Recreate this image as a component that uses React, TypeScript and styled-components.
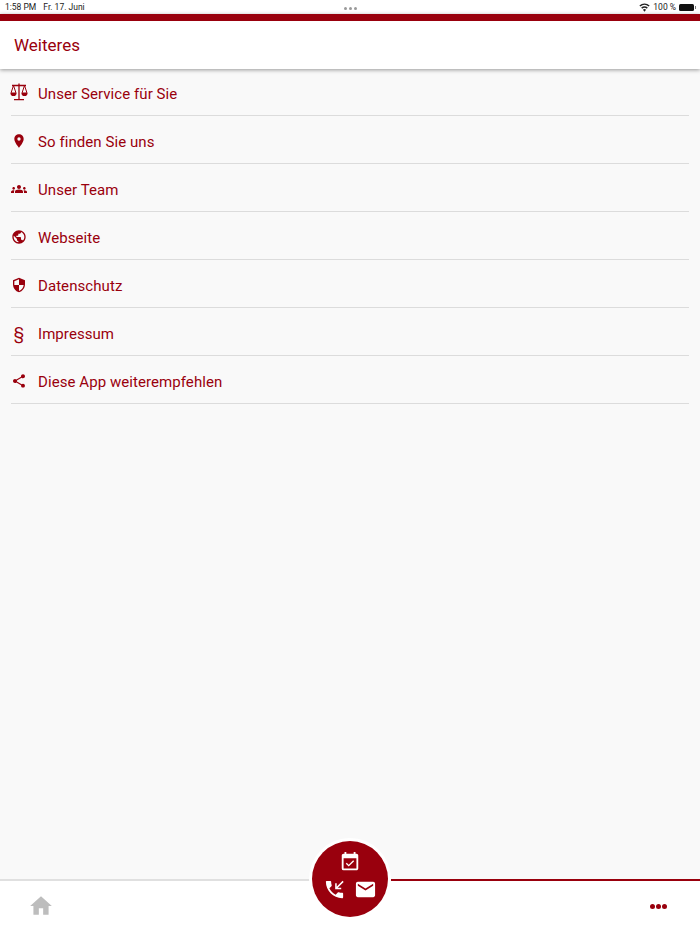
import styled, {createGlobalStyle} from "styled-components";
import {ReactNode} from "react";
import {
    MdEmail,
    MdEventAvailable,
    MdGroups,
    MdHome,
    MdLocationOn,
    MdPublic,
    MdSecurity,
    MdShare,
} from "react-icons/md";

const RED = "#99000d";

const GlobalStyle = createGlobalStyle`
    html, body {
        margin: 0;
        padding: 0;
        background: #f9f9f9;
        font-family: Roboto, "Liberation Sans", sans-serif;
    }
`;

const Page = styled.div`
    position: relative;
    display: flex;
    flex-direction: column;
    width: 700px;
    height: 934px;
    overflow: hidden;
`;

const StatusBar = styled.div`
    display: grid;
    grid-template-columns: 1fr auto 1fr;
    align-items: center;
    height: 14px;
    padding: 0 4px 0 5px;
    background: #fff;
    color: #222;
    font-size: 8.500px;
    line-height: 14px;
`;

const StatusGroup = styled.div`
    display: flex;
    align-items: center;
    gap: 7px;
`;

const StatusRight = styled(StatusGroup)`
    justify-content: flex-end;
    gap: 3px;
`;

const Grabber = styled.div`
    display: flex;
    gap: 2px;
    margin-top: 3px;

    span {
        width: 3px;
        height: 3px;
        border-radius: 50%;
        background: #9a9a9a;
    }
`;

const Battery = styled.div`
    display: flex;
    align-items: center;
    width: 17px;
    height: 8px;

    &::before {
        content: "";
        width: 15px;
        height: 7px;
        border-radius: 1.500px;
        background: #111;
    }

    &::after {
        content: "";
        width: 1px;
        height: 3px;
        margin-left: 1px;
        background: #777;
    }
`;

const Header = styled.header`
    position: relative;
    z-index: 1;
    display: flex;
    align-items: center;
    height: 48px;
    padding-left: 14px;
    border-top: 7px solid ${RED};
    background: #fff;
    box-shadow: 0 1px 4px rgba(0, 0, 0, 0.4);
    color: ${RED};
    font-size: 17px;
`;

const List = styled.ul`
    flex: 1;
    margin: -1px 0 0;
    padding: 0 11px;
    list-style: none;
    background: #f9f9f9;
`;

const Row = styled.li`
    display: flex;
    align-items: center;
    box-sizing: border-box;
    height: 48px;
    padding-top: 3px;
    border-bottom: 1px solid #dcdcdc;
    color: ${RED};
    font-size: 15px;
    letter-spacing: 0.07px;
`;

const RowLabel = styled.span`
    padding-top: 2px;
`;

const IconSlot = styled.span`
    display: flex;
    flex: none;
    align-items: center;
    justify-content: center;
    width: 16px;
    margin-right: 11px;
    font-size: 18px;
`;

const Paragraph = styled.span`
    font-size: 17px;
    line-height: 18px;
`;

const ScaleSvg = styled.svg`
    flex: none;
    margin-top: -2px;
`;

const BottomBar = styled.nav`
    display: flex;
    align-items: center;
    justify-content: space-between;
    height: 53px;
    padding: 0 30px;
    border-top: 2px solid #e0e0e0;
    background: #fff;
`;

const RedLine = styled.div`
    position: absolute;
    right: 0;
    bottom: 53px;
    width: 309px;
    height: 2px;
    background: ${RED};
`;

const HomeButton = styled.button`
    display: flex;
    margin: 0 0 3px -2px;
    padding: 0;
    border: 0;
    background: none;
    color: #bdbdbd;
    font-size: 26px;
`;

const MoreButton = styled.button`
    display: flex;
    gap: 1px;
    margin: 0 3px 2px 0;
    padding: 0;
    border: 0;
    background: none;

    span {
        width: 5px;
        height: 5px;
        border-radius: 50%;
        background: ${RED};
    }
`;

const Fab = styled.div`
    position: absolute;
    left: 312px;
    top: 841px;
    display: grid;
    grid-template-columns: 1fr 1fr;
    align-content: start;
    width: 76px;
    height: 76px;
    box-sizing: border-box;
    padding: 10px 7px 0;
    border-radius: 50%;
    background: ${RED};
    box-shadow: 0 0 0 3px #fff;
    color: #fff;
`;

const FabTop = styled.span`
    grid-column: 1 / 3;
    display: flex;
    justify-content: center;
    height: 22px;
    font-size: 22px;
`;

const FabCell = styled.span`
    display: flex;
    justify-content: center;
    margin-top: 5px;
    font-size: 23px;
`;

function WifiIcon() {
    return (
        <svg width="11" height="9" viewBox="0 0 12 9" fill="#222">
            <path d="M6 9 4.300 6.900a2.700 2.700 0 0 1 3.400 0zM3.400 5.800 2.400 4.600a5.600 5.600 0 0 1 7.200 0L8.600 5.800a4 4 0 0 0-5.200 0zM1.500 3.500.4 2.200a8.600 8.600 0 0 1 11.200 0L10.500 3.500a7 7 0 0 0-9 0z"/>
        </svg>
    );
}

function ScaleIcon() {
    return (
        <ScaleSvg width="18" height="18" viewBox="0 0 18 18" fill="none" stroke={RED} strokeWidth="1.300">
            <path d="M9 .5V16M2 2.500h14M4 16.700h10"/>
            <path d="M3.500 2.500 1 10h5zM14.500 2.500 12 10h5z" strokeWidth="1"/>
            <path d="M.4 10a3.100 3.100 0 0 0 6.200 0zM11.400 10a3.100 3.100 0 0 0 6.200 0z" fill={RED} stroke="none"/>
        </ScaleSvg>
    );
}

function PhoneArrowIcon() {
    return (
        <svg width="1em" height="1em" viewBox="0 0 24 24" fill="currentColor">
            <path d="M20 15.500c-1.250 0-2.450-.2-3.570-.57-.35-.11-.74-.03-1.020.24l-2.200 2.200c-2.830-1.440-5.150-3.750-6.590-6.590l2.200-2.210c.28-.26.36-.65.25-1C8.700 6.450 8.500 5.250 8.500 4c0-.55-.45-1-1-1H4c-.55 0-1 .45-1 1 0 9.390 7.610 17 17 17 .55 0 1-.45 1-1v-3.500c0-.55-.45-1-1-1z"/>
            <path d="M21 3.500 13.500 11M13.500 5.500V11H19" fill="none" stroke="currentColor" strokeWidth="1.600"/>
        </svg>
    );
}

interface MenuEntry {
    label: string
    icon: ReactNode
}

const entries: MenuEntry[] = [
    {label: "Unser Service für Sie", icon: <ScaleIcon/>},
    {label: "So finden Sie uns", icon: <MdLocationOn/>},
    {label: "Unser Team", icon: <MdGroups/>},
    {label: "Webseite", icon: <MdPublic/>},
    {label: "Datenschutz", icon: <MdSecurity/>},
    {label: "Impressum", icon: <Paragraph>§</Paragraph>},
    {label: "Diese App weiterempfehlen", icon: <MdShare/>},
];

export default function App() {
    return (
        <Page>
            <GlobalStyle/>
            <StatusBar>
                <StatusGroup>
                    <span>1:58 PM</span>
                    <span>Fr. 17. Juni</span>
                </StatusGroup>
                <Grabber><span/><span/><span/></Grabber>
                <StatusRight>
                    <WifiIcon/>
                    <span>100 %</span>
                    <Battery/>
                </StatusRight>
            </StatusBar>
            <Header>Weiteres</Header>
            <List>
                {entries.map((entry) => (
                    <Row key={entry.label}>
                        <IconSlot>{entry.icon}</IconSlot>
                        <RowLabel>{entry.label}</RowLabel>
                    </Row>
                ))}
            </List>
            <RedLine/>
            <BottomBar>
                <HomeButton aria-label="Start"><MdHome/></HomeButton>
                <MoreButton aria-label="Weiteres"><span/><span/><span/></MoreButton>
            </BottomBar>
            <Fab>
                <FabTop><MdEventAvailable/></FabTop>
                <FabCell><PhoneArrowIcon/></FabCell>
                <FabCell><MdEmail/></FabCell>
            </Fab>
        </Page>
    );
}
